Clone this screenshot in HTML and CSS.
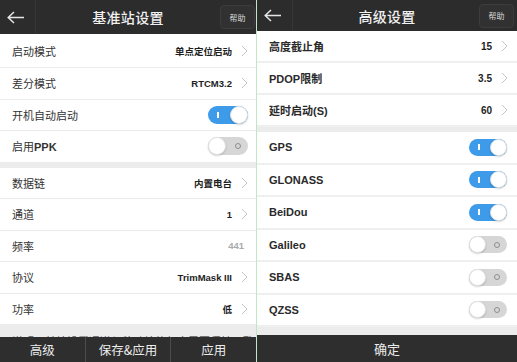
FILE: index.html
```html
<!DOCTYPE html>
<html lang="zh-CN">
<head>
<meta charset="utf-8">
<link rel="stylesheet" href="styles.css">
</head>
<body>
<div class="app">
  <section class="panel panel-left">
    <header class="topbar">
      <div class="back"><svg width="18" height="13" viewBox="0 0 18 13"><path d="M1 6.5h16M7 1L1.2 6.5 7 12" fill="none" stroke="#e6e6e6" stroke-width="1.5"/></svg></div>
      <div class="title">基准站设置</div>
      <div class="help-wrap"><button class="help">帮助</button></div>
    </header>
    <div class="content">
      <div class="group">
        <div class="row first"><span class="label">启动模式</span><span class="value">单点定位启动</span><svg class="chev" width="7" height="12" viewBox="0 0 7 12"><path d="M1 1l5 5-5 5" fill="none" stroke="#c4c4c4" stroke-width="1"/></svg></div>
        <div class="row"><span class="label">差分模式</span><span class="value">RTCM3.2</span><svg class="chev" width="7" height="12" viewBox="0 0 7 12"><path d="M1 1l5 5-5 5" fill="none" stroke="#c4c4c4" stroke-width="1"/></svg></div>
        <div class="row"><span class="label">开机自动启动</span><span class="switch on"><i class="mark"></i><span class="knob"></span></span></div>
        <div class="row"><span class="label">启用<b>PPK</b></span><span class="switch off"><span class="knob"></span><i class="mark"></i></span></div>
      </div>
      <div class="gap"></div>
      <div class="group">
        <div class="row"><span class="label">数据链</span><span class="value">内置电台</span><svg class="chev" width="7" height="12" viewBox="0 0 7 12"><path d="M1 1l5 5-5 5" fill="none" stroke="#c4c4c4" stroke-width="1"/></svg></div>
        <div class="row"><span class="label">通道</span><span class="value">1</span><svg class="chev" width="7" height="12" viewBox="0 0 7 12"><path d="M1 1l5 5-5 5" fill="none" stroke="#c4c4c4" stroke-width="1"/></svg></div>
        <div class="row"><span class="label">频率</span><span class="value muted">441</span></div>
        <div class="row"><span class="label">协议</span><span class="value">TrimMask III</span><svg class="chev" width="7" height="12" viewBox="0 0 7 12"><path d="M1 1l5 5-5 5" fill="none" stroke="#c4c4c4" stroke-width="1"/></svg></div>
        <div class="row"><span class="label">功率</span><span class="value">低</span><svg class="chev" width="7" height="12" viewBox="0 0 7 12"><path d="M1 1l5 5-5 5" fill="none" stroke="#c4c4c4" stroke-width="1"/></svg></div>
      </div>
      <p class="note">说明：基站设置通道与移动站的频率需要保持一致</p>
    </div>
    <footer class="bottombar">
      <button class="tab">高级</button>
      <button class="tab">保存&amp;应用</button>
      <button class="tab">应用</button>
    </footer>
  </section>
  <div class="split"></div>
  <section class="panel panel-right">
    <header class="topbar">
      <div class="back"><svg width="18" height="13" viewBox="0 0 18 13"><path d="M1 6.5h16M7 1L1.2 6.5 7 12" fill="none" stroke="#e6e6e6" stroke-width="1.5"/></svg></div>
      <div class="title">高级设置</div>
      <div class="help-wrap"><button class="help">帮助</button></div>
    </header>
    <div class="content">
      <div class="group">
        <div class="row"><span class="label">高度截止角</span><span class="value">15</span><svg class="chev" width="7" height="12" viewBox="0 0 7 12"><path d="M1 1l5 5-5 5" fill="none" stroke="#c4c4c4" stroke-width="1"/></svg></div>
        <div class="row"><span class="label">PDOP限制</span><span class="value">3.5</span><svg class="chev" width="7" height="12" viewBox="0 0 7 12"><path d="M1 1l5 5-5 5" fill="none" stroke="#c4c4c4" stroke-width="1"/></svg></div>
        <div class="row"><span class="label">延时启动(S)</span><span class="value">60</span><svg class="chev" width="7" height="12" viewBox="0 0 7 12"><path d="M1 1l5 5-5 5" fill="none" stroke="#c4c4c4" stroke-width="1"/></svg></div>
      </div>
      <div class="gap"></div>
      <div class="group">
        <div class="row tall"><span class="label">GPS</span><span class="switch on"><i class="mark"></i><span class="knob"></span></span></div>
        <div class="row tall"><span class="label">GLONASS</span><span class="switch on"><i class="mark"></i><span class="knob"></span></span></div>
        <div class="row tall"><span class="label">BeiDou</span><span class="switch on"><i class="mark"></i><span class="knob"></span></span></div>
        <div class="row tall"><span class="label">Galileo</span><span class="switch off"><span class="knob"></span><i class="mark"></i></span></div>
        <div class="row tall"><span class="label">SBAS</span><span class="switch off"><span class="knob"></span><i class="mark"></i></span></div>
        <div class="row tall"><span class="label">QZSS</span><span class="switch off"><span class="knob"></span><i class="mark"></i></span></div>
      </div>
    </div>
    <footer class="bottombar">
      <button class="tab">确定</button>
    </footer>
  </section>
</div>
</body>
</html>
```
FILE: styles.css
```css
* { box-sizing: border-box; margin: 0; padding: 0; }
html, body { width: 517px; height: 362px; overflow: hidden; background: #fff; }
body { font-family: "Liberation Sans", "Noto Sans CJK SC", sans-serif; color: #333; }

.app { display: flex; height: 362px; }
.panel { display: flex; flex-direction: column; height: 362px; overflow: hidden; background: #fff; }
.panel-left { width: 256px; }
.panel-right { width: 260px; }
.split { width: 1px; background: #c2e6c2; }

.topbar {
  flex: none;
  display: grid;
  grid-template-columns: 36px 1fr 36px;
  align-items: center;
  background: #2c2c2c;
}
.panel-left .topbar { height: 34px; }
.panel-right .topbar { height: 31px; }
.back {
  height: 100%;
  display: flex;
  align-items: center;
  padding-left: 7px;
  border-right: 1px solid #363636;
}
.title {
  text-align: center;
  color: #f0f0f0;
  font-family: "Noto Sans CJK SC", sans-serif;
  font-size: 14px;
  font-weight: 500;
  letter-spacing: 0.3px;
}
.help-wrap { display: flex; justify-content: flex-start; }
.help {
  width: 35px;
  height: 24px;
  border: 1px solid #3c3c3c;
  background: #313131;
  border-radius: 4px;
  color: #d8d8d8;
  font-family: "Noto Sans CJK SC", sans-serif;
  font-size: 8px;
}
.panel-right .help-wrap { margin-left: -2px; }

.content { flex: 1; overflow: hidden; background: #ececec; }
.group { background: #fff; }
.gap { height: 5px; }

.row {
  display: flex;
  align-items: center;
  height: 31.5px;
  padding: 0 8px 0 12px;
  border-bottom: 1px solid #ececec;
}
.row.first { height: 34px; }
.label {
  flex: 1;
  font-family: "Noto Sans CJK SC", sans-serif;
  font-size: 11px;
  color: #333;
}
.label b { font-family: "Liberation Sans", sans-serif; font-weight: 700; }
.value {
  font-family: "Liberation Sans", "Noto Sans CJK SC", sans-serif;
  font-size: 9.5px;
  font-weight: 700;
  color: #1e1e1e;
}
.value.muted { color: #aaa; margin-right: 4px; }
.chev { margin-left: 9px; flex: none; }

.panel-right .row { height: 32px; padding: 0 9px 0 12px; border-bottom: 2px solid #efefef; }
.panel-right .row.tall { height: 32.5px; padding-right: 10px; }
.panel-right .label {
  font-family: "Liberation Sans", "Noto Sans CJK SC", sans-serif;
  font-weight: 700;
  font-size: 11px;
  color: #2a2a2a;
}
.panel-right .value { font-size: 10px; }

.switch {
  display: flex;
  align-items: center;
  justify-content: space-between;
  width: 40px;
  height: 18px;
  border-radius: 9px;
  flex: none;
}
.panel-right .switch { width: 38px; height: 17px; }
.switch.on { background: #3d9be9; padding-left: 9px; }
.switch.off { background: #d6d6d6; padding-right: 7px; }
.knob {
  width: 18px;
  height: 18px;
  border-radius: 50%;
  background: #fff;
  border: 1px solid #e2e2e2;
  box-shadow: 0 1px 2px rgba(0,0,0,0.18);
}
.panel-right .knob { width: 17px; height: 17px; }
.switch.on .mark { width: 1.5px; height: 6px; background: #fff; }
.switch.off .mark { width: 6px; height: 6px; border: 1px solid #8e8e8e; border-radius: 50%; }

.note {
  padding: 9px 12px 0;
  font-family: "Noto Sans CJK SC", sans-serif;
  font-size: 11px;
  line-height: 14px;
  color: #555;
  white-space: nowrap;
}

.bottombar { flex: none; display: flex; background: #2e2e2e; }
.panel-left .bottombar { height: 25px; }
.panel-right .bottombar { height: 27px; }
.tab {
  flex: 1;
  border: none;
  background: transparent;
  color: #ececec;
  font-family: "Noto Sans CJK SC", sans-serif;
  font-size: 12.5px;
}
.tab + .tab { border-left: 1px solid #4c4c4c; }
.panel-right .tab { font-size: 13px; }
```
